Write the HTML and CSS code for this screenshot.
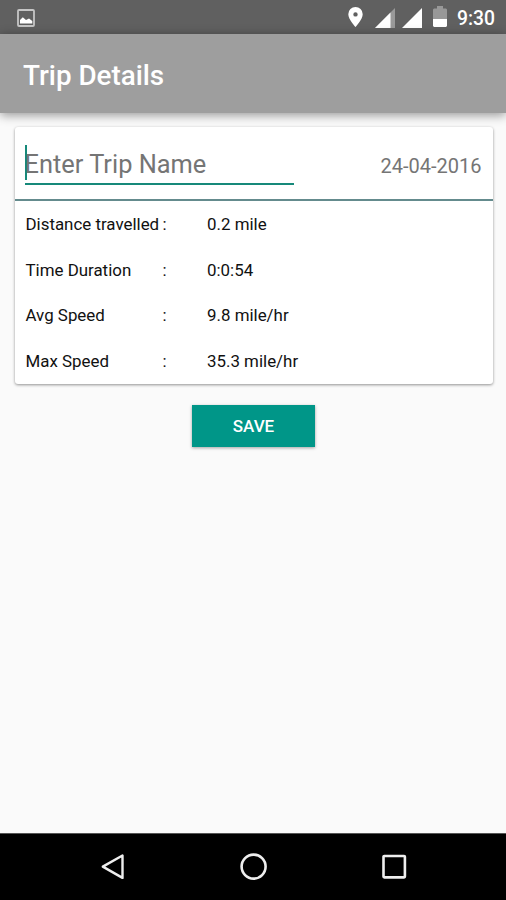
FILE: index.html
```html
<!DOCTYPE html>
<html lang="en">
<head>
<meta charset="utf-8">
<title>Trip Details</title>
<link rel="stylesheet" href="styles.css">
</head>
<body>
<div class="screen">
  <div class="status-bar">
    <svg class="picture-icon" width="18" height="18" viewBox="0 0 18 18">
      <rect x="1" y="1" width="16" height="16" rx="1" fill="none" stroke="#c6c6c6" stroke-width="1.8"/>
      <path d="M3 14.5V11L5.8 8.2L9 11L12 9.5L15.3 12V14.5Z" fill="#fff"/>
    </svg>
    <div class="indicators">
      <svg class="pin-icon" width="15" height="20" viewBox="0 0 15 20">
        <path fill="#fff" fill-rule="evenodd" d="M7.5 0A7.2 7.2 0 0 0 .3 7.2C.3 12.3 7.5 20 7.5 20S14.7 12.3 14.7 7.2A7.2 7.2 0 0 0 7.5 0ZM7.5 5.2A2.2 2.2 0 1 1 7.5 9.6A2.2 2.2 0 1 1 7.5 5.2Z"/>
      </svg>
      <svg class="signal-icon" width="20" height="20" viewBox="0 0 20 20">
        <path d="M0 20L20 0V20Z" fill="#999"/>
        <path d="M0 20L15.5 4.5V20Z" fill="#fff"/>
      </svg>
      <svg class="signal-icon" width="20" height="20" viewBox="0 0 20 20">
        <path d="M0 20L20 0V20Z" fill="#fff"/>
      </svg>
      <svg class="battery-icon" width="14" height="21" viewBox="0 0 14 21">
        <path d="M1 2.5H4V0H10V2.5H13L14 3.5V13H0V3.5Z" fill="#989898"/>
        <path d="M0 13H14V20L13 21H1L0 20Z" fill="#fff"/>
      </svg>
      <span class="clock">9:30</span>
    </div>
  </div>
  <header class="app-bar"><h1>Trip Details</h1></header>
  <main class="content">
    <section class="card">
      <div class="card-head">
        <div class="name-field"><span class="hint">Enter Trip Name</span></div>
        <span class="date">24-04-2016</span>
      </div>
      <div class="stats">
        <div class="row"><span class="label">Distance travelled</span><span class="colon">:</span><span>0.2 mile</span></div>
        <div class="row"><span class="label">Time Duration</span><span class="colon">:</span><span>0:0:54</span></div>
        <div class="row"><span class="label">Avg Speed</span><span class="colon">:</span><span>9.8 mile/hr</span></div>
        <div class="row"><span class="label">Max Speed</span><span class="colon">:</span><span>35.3 mile/hr</span></div>
      </div>
    </section>
    <button class="save" type="button">SAVE</button>
  </main>
  <nav class="nav-bar">
    <svg width="28" height="28" viewBox="0 0 28 28"><path d="M3.8 13.6L23.5 2.5V24.9Z" fill="none" stroke="#eee" stroke-width="2.4" stroke-linejoin="round"/></svg>
    <svg width="28" height="28" viewBox="0 0 28 28"><circle cx="13.6" cy="13.6" r="12" fill="none" stroke="#eee" stroke-width="2.6"/></svg>
    <svg width="28" height="28" viewBox="0 0 28 28"><rect x="3.5" y="3" width="21.4" height="21.4" rx=".8" fill="none" stroke="#eee" stroke-width="2.6"/></svg>
  </nav>
</div>
</body>
</html>
```
FILE: styles.css
```css
* { box-sizing: border-box; }
body { margin: 0; font-family: Roboto, sans-serif; background: #fafafa; }
.screen { width: 506px; height: 900px; display: flex; flex-direction: column; overflow: hidden; }
.status-bar { height: 34px; background: #606060; display: flex; justify-content: space-between; padding: 0 11px 0 17px; }
.picture-icon { margin-top: 9px; }
.indicators { display: flex; align-items: flex-start; color: #fff; }
.pin-icon { margin: 7px 12px 0 0; }
.signal-icon { margin: 8px 7px 0 0; }
.battery-icon { margin: 6px 10px 0 4px; }
.clock { width: 38px; font-size: 19.3px; font-weight: 500; line-height: 37px; white-space: nowrap; }
.app-bar { height: 79px; background: #9e9e9e; padding-left: 23px; box-shadow: 0 2px 10px rgba(0, 0, 0, .42); }
h1 { margin: 0; font-size: 27.8px; font-weight: 500; line-height: 84px; color: #fff; }
.content { flex: 1; display: flex; flex-direction: column; align-items: center; padding-top: 14px; }
.card { width: 478px; height: 257px; margin-left: 1px; background: #fff; border-radius: 3px; box-shadow: 0 1px 3px rgba(0, 0, 0, .42); }
.card-head { height: 74px; display: flex; justify-content: space-between; padding: 18px 11px 0 10px; border-bottom: 2px solid #648b8d; color: #757575; }
.name-field { width: 269px; height: 40px; border-bottom: 2px solid #16897a; }
.hint { display: block; height: 35px; border-left: 2px solid #16897a; font-size: 25.4px; line-height: 39px; text-indent: -2px; white-space: nowrap; }
.date { font-size: 20px; line-height: 43px; }
.stats { padding: 0 0 0 11px; }
.row { height: 45.7px; display: grid; grid-template-columns: 137px 44.5px auto; align-items: center; font-size: 16.9px; color: #111; white-space: nowrap; }
.save { width: 123px; height: 42px; margin: 21px 0 0 1px; padding: 0; border: 0; background: #009688; color: #fff; font: 500 17px/43px Roboto, sans-serif; box-shadow: 0 1px 3px rgba(0, 0, 0, .35); }
.nav-bar { height: 67px; background: #000; border-top: 1px solid #555; display: flex; align-items: center; justify-content: space-between; padding: 0 98px 0 99px; }
```
